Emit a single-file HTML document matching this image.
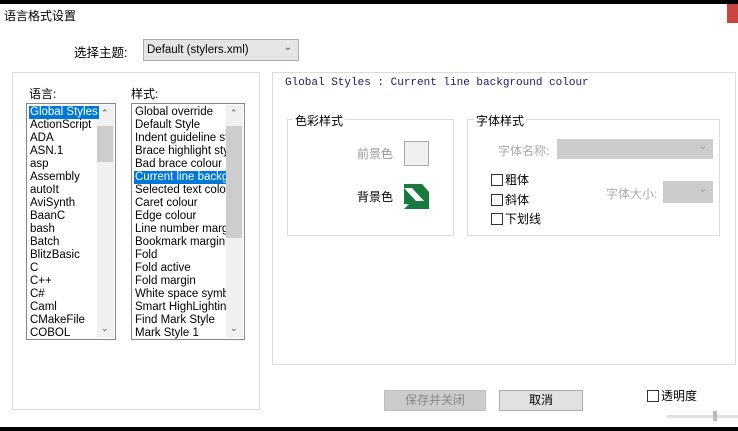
<!DOCTYPE html>
<html><head><meta charset="utf-8"><style>
*{margin:0;padding:0;box-sizing:border-box}
body{width:738px;height:431px;background:#fff;position:relative;overflow:hidden;font-family:"Liberation Sans","Noto Sans CJK SC",sans-serif;font-size:12px;color:#000}
.a{position:absolute}
.lb{border:1px solid #828790;background:#fff}
.li{position:absolute;left:2px;height:13px;line-height:13px;white-space:nowrap;font-size:11.5px;padding:0 1px}
.sel{background:#0078d7;color:#fff}
.sb{position:absolute;top:1px;bottom:1px;width:17px;right:1px;background:#f0f0f0}
.cb{display:inline-block;width:12px;height:12px;border:1px solid #333;vertical-align:-2px;margin-right:2px;background:#fff}
.grp{border:1px solid #dcdcdc}
</style></head><body>
<div class="a" style="left:0;top:0;width:738px;height:4px;background:#000"></div>
<div class="a" style="left:727px;top:4px;width:11px;height:19px;background:#c9453f"></div>
<div class="a" style="left:0;top:427px;width:738px;height:4px;background:#000"></div>
<div class="a" style="left:4px;top:7px;font-size:12px">语言格式设置</div>
<div class="a" style="left:74px;top:42px;font-size:12.5px">选择主题:</div>
<div class="a" style="left:143px;top:39px;width:156px;height:22px;border:1px solid #adadad;background:#e5e5e5;padding:4px 0 0 3px;font-size:11.5px">Default (stylers.xml)<span class="a" style="right:6px;top:2px;color:#555;font-size:10px">&#8964;</span></div>

<div class="a grp" style="left:12px;top:72px;width:248px;height:338px"></div>
<div class="a" style="left:29px;top:85px">语言:</div>
<div class="a" style="left:131px;top:85px">样式:</div>
<div class="a lb" style="left:26px;top:103px;width:90px;height:237px">
<div class="sb"><div class="a" style="left:0;top:21px;width:16px;height:36px;background:#cdcdcd"></div><div class="a" style="left:4px;top:3px;font-size:9px;color:#555">&#8963;</div><div class="a" style="left:4px;bottom:4px;font-size:9px;color:#555">&#8964;</div></div>
<div class="li sel" style="top:2px">Global Styles</div>
<div class="li" style="top:15px">ActionScript</div>
<div class="li" style="top:28px">ADA</div>
<div class="li" style="top:41px">ASN.1</div>
<div class="li" style="top:54px">asp</div>
<div class="li" style="top:67px">Assembly</div>
<div class="li" style="top:80px">autoIt</div>
<div class="li" style="top:93px">AviSynth</div>
<div class="li" style="top:106px">BaanC</div>
<div class="li" style="top:119px">bash</div>
<div class="li" style="top:132px">Batch</div>
<div class="li" style="top:145px">BlitzBasic</div>
<div class="li" style="top:158px">C</div>
<div class="li" style="top:171px">C++</div>
<div class="li" style="top:184px">C#</div>
<div class="li" style="top:197px">Caml</div>
<div class="li" style="top:210px">CMakeFile</div>
<div class="li" style="top:223px">COBOL</div>
</div>
<div class="a lb" style="left:131px;top:103px;width:114px;height:237px;overflow:hidden">
<div class="li" style="top:2px">Global override</div>
<div class="li" style="top:15px">Default Style</div>
<div class="li" style="top:28px">Indent guideline style</div>
<div class="li" style="top:41px">Brace highlight style</div>
<div class="li" style="top:54px">Bad brace colour</div>
<div class="li sel" style="top:67px;width:92px;overflow:hidden">Current line background</div>
<div class="li" style="top:80px">Selected text colour</div>
<div class="li" style="top:93px">Caret colour</div>
<div class="li" style="top:106px">Edge colour</div>
<div class="li" style="top:119px">Line number margin</div>
<div class="li" style="top:132px">Bookmark margin</div>
<div class="li" style="top:145px">Fold</div>
<div class="li" style="top:158px">Fold active</div>
<div class="li" style="top:171px">Fold margin</div>
<div class="li" style="top:184px">White space symbol</div>
<div class="li" style="top:197px">Smart HighLighting</div>
<div class="li" style="top:210px">Find Mark Style</div>
<div class="li" style="top:223px">Mark Style 1</div>
<div class="sb"><div class="a" style="left:0;top:21px;width:16px;height:112px;background:#cdcdcd"></div><div class="a" style="left:4px;top:3px;font-size:9px;color:#555">&#8963;</div><div class="a" style="left:4px;bottom:4px;font-size:9px;color:#555">&#8964;</div></div>
</div>

<div class="a grp" style="left:272px;top:72px;width:464px;height:293px"></div>
<div class="a" style="left:285px;top:77px;font-family:'Liberation Mono',monospace;font-size:11px;color:#1a1a6e">Global Styles : Current line background colour</div>
<div class="a grp" style="left:287px;top:119px;width:167px;height:117px"></div>
<div class="a" style="left:293px;top:112px;background:#fff;padding:0 2px">色彩样式</div>
<div class="a" style="left:357px;top:145px;color:#999">前景色</div>
<div class="a" style="left:404px;top:141px;width:25px;height:25px;border:1px solid #aaa;background:#f0f0f0"></div>
<div class="a" style="left:357px;top:188px">背景色</div>
<svg class="a" style="left:404px;top:184px" width="25" height="25"><rect width="25" height="25" fill="#1a7a3e"/><path d="M0 4 L8 4 L20 17 L12 17 Z M18 0 L25 0 L25 8 Z M0 20 L5 20 L0 25 Z" fill="#fff"/></svg>
<div class="a grp" style="left:467px;top:119px;width:253px;height:117px"></div>
<div class="a" style="left:474px;top:112px;background:#fff;padding:0 2px">字体样式</div>
<div class="a" style="left:498px;top:142px;color:#aaa">字体名称:</div>
<div class="a" style="left:557px;top:139px;width:156px;height:20px;background:#ccc"><span class="a" style="right:6px;top:2px;color:#999;font-size:10px">&#8964;</span></div>
<div class="a" style="left:491px;top:171px"><span class="cb"></span>粗体</div>
<div class="a" style="left:491px;top:191px"><span class="cb"></span>斜体</div>
<div class="a" style="left:491px;top:210px"><span class="cb"></span>下划线</div>
<div class="a" style="left:606px;top:185px;color:#aaa">字体大小:</div>
<div class="a" style="left:663px;top:181px;width:50px;height:22px;background:#ccc"><span class="a" style="right:6px;top:3px;color:#999;font-size:10px">&#8964;</span></div>

<div class="a" style="left:384px;top:390px;width:102px;height:21px;background:#ccc;border:1px solid #bfbfbf;text-align:center;line-height:19px;color:#888">保存并关闭</div>
<div class="a" style="left:499px;top:390px;width:84px;height:21px;background:#e1e1e1;border:1px solid #adadad;text-align:center;line-height:19px">取消</div>
<div class="a" style="left:647px;top:387px"><span class="cb"></span>透明度</div>
<div class="a" style="left:667px;top:415px;width:71px;height:3px;background:#e0e0e0"></div>
<div class="a" style="left:713px;top:411px;width:4px;height:10px;background:#bbb"></div>
</body></html>
